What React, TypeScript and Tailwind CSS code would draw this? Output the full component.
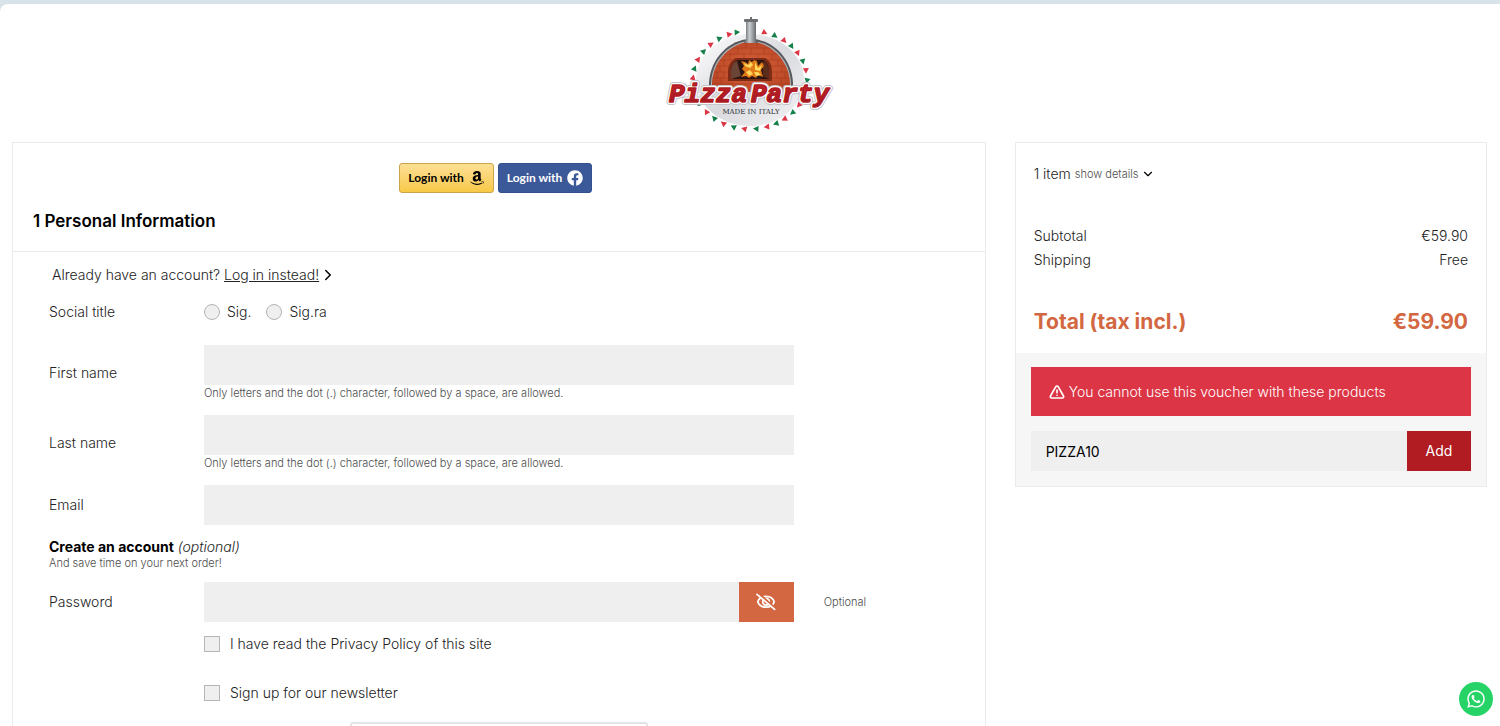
import { useState } from 'react';
import type { ReactNode } from 'react';
import { FaAmazon, FaFacebook, FaWhatsapp } from 'react-icons/fa';
import { ChevronDown, ChevronRight, TriangleAlert } from 'lucide-react';

const NAME_HINT = 'Only letters and the dot (.) character, followed by a space, are allowed.';

// little flags around the badge, angles in degrees (0 = right, clockwise)
const FLAGS = [
  -75, -64, -53, -43, -33, -22, -11, 1, 31, 42, 53, 63, 73, 84, 96, 107, 118, 129, 140, 152, 183, 194, 205, 216, 227,
  238, 249, 257,
];

function Logo() {
  return (
    <svg viewBox="0 0 180 130" className="h-[130px] w-[180px]" role="img" aria-label="Pizza Party">
      <defs>
        <linearGradient id="disc" x1="0" y1="0" x2="1" y2="1">
          <stop offset="0" stopColor="#ffffff" />
          <stop offset="0.5" stopColor="#d9dade" />
          <stop offset="1" stopColor="#f4f4f6" />
        </linearGradient>
        <linearGradient id="pipe" x1="0" x2="1">
          <stop offset="0" stopColor="#55585b" />
          <stop offset="0.4" stopColor="#c9cdd0" />
          <stop offset="1" stopColor="#4a4c4f" />
        </linearGradient>
        <radialGradient id="brick" cx="0.5" cy="0.5" r="0.6">
          <stop offset="0" stopColor="#d8623a" />
          <stop offset="1" stopColor="#b84424" />
        </radialGradient>
        <linearGradient id="title" x1="0" y1="0" x2="0" y2="1">
          <stop offset="0" stopColor="#d0242c" />
          <stop offset="1" stopColor="#8f141b" />
        </linearGradient>
        <clipPath id="dome">
          <path d="M52 82 V73 C53 50 72 32 91 32 C110 32 129 50 130 73 V82 Z" />
        </clipPath>
      </defs>
      <ellipse cx="90" cy="70" rx="54" ry="46" fill="url(#disc)" />
      {FLAGS.map((deg, i) => {
        const a = (deg * Math.PI) / 180;
        return (
          <path
            key={deg}
            d="M-2.5 -3 L3 0 L-2.5 3 Z"
            fill={i % 2 ? '#16804b' : '#dc3545'}
            transform={`translate(${90 + 57 * Math.cos(a)} ${70 + 49 * Math.sin(a)}) rotate(${deg + 100})`}
          />
        );
      })}
      <path d="M49 82 V73 C50 48 70 29 91 29 C112 29 132 48 133 73 V82 Z" fill="#56585c" />
      <path d="M51 82 V73 C52 49 71 31 91 31 C111 31 130 49 131 73 V82 Z" fill="#aeb2b6" />
      <path d="M52 82 V73 C53 50 72 32 91 32 C110 32 129 50 130 73 V82 Z" fill="url(#brick)" />
      <g clipPath="url(#dome)" stroke="#9c3a1d" strokeWidth="0.5" fill="none">
        <path d="M50 38H132M50 44H132M50 50H132M50 56H132M50 62H132M50 68H132M50 74H132" />
        <path d="M86 32v6M97 32v6M78 38v6M91 38v6M104 38v6M70 44v6M84 44v6M98 44v6M112 44v6M64 50v6M118 50v6M60 56v6M122 56v6M57 62v6M64 62v6M117 62v6M125 62v6M61 68v6M121 68v6M70 74v6M84 74v6M98 74v6M112 74v6" />
      </g>
      <path d="M68 71 V62 C68 54 72 50 76 48 H105 C109 50 112 54 112 62 V71 Z" fill="#7d2c17" />
      <path d="M71 69 V62 C71 55 75 51 78 50 H103 C107 52 109 56 109 62 V69 Z" fill="#2d1510" />
      <path d="M71 69 V62 C71 56 74 52 77 51 L81 66 Z" fill="#6a4436" />
      <path d="M109 69 V62 C109 56 106 52 103 51 L103 66 Z" fill="#5c2c1b" />
      <path
        d="M81 67 L85 62 L82 59 L84 56 L81 51 L85 52 L88 54 L89 50 L92 52 L94 50 L97 51 L98 56 L102 52 L104 56 L101 60 L103 67 L98 65 L96 68 L92 66 L89 68 L86 66 Z"
        fill="#e07a17"
      />
      <path
        d="M84 53 L88 55 L91 52 L93 55 L90 58 L85 56 Z M95 52 L98 58 L102 55 L100 61 L95 60 Z M86 62 L90 60 L93 64 L89 66 Z M94 62 L98 62 L101 65 L96 66 Z"
        fill="#ffd75a"
      />
      <path d="M86 11 H96 V29 L98 33 H84 L86 29 Z" fill="url(#pipe)" />
      <rect x="84" y="9" width="14" height="3" rx="1" fill="#6c7073" />
      <rect x="90" y="7" width="2" height="2" fill="#6c7073" />
      <g
        fontSize="26"
        strokeLinejoin="round"
        className="font-['Liberation_Mono',monospace] font-bold italic"
      >
        <g stroke="#c4c4ca" strokeWidth="6" fill="none" aria-hidden="true">
          <text x="9" y="92">Pizza</text>
          <text x="91" y="92">Party</text>
        </g>
        <g stroke="#ffffff" strokeWidth="4" fill="none" aria-hidden="true">
          <text x="9" y="92">Pizza</text>
          <text x="91" y="92">Party</text>
        </g>
        <g stroke="#b01c24" strokeWidth="1.5" fill="url(#title)">
          <text x="9" y="92">Pizza</text>
          <text x="91" y="92">Party</text>
        </g>
      </g>
      <text x="91" y="104" textAnchor="middle" fontSize="7" fill="#2f2f33" className="font-['DejaVu_Serif',serif]">
        MADE IN ITALY
      </text>
    </svg>
  );
}

function EyeSlash() {
  return (
    <svg viewBox="0 0 20 20" className="size-5" fill="none" stroke="currentColor" strokeWidth="1.8" aria-hidden="true">
      <path d="M1.8 9.8 C4 2.6 16 2.6 18.2 9.8 C16 17 4 17 1.8 9.8 Z" />
      <circle cx="10" cy="9.8" r="3.3" />
      <path d="M2.6 1.2 L19 16" stroke="#d36741" strokeWidth="2" />
      <path d="M1 2.4 L18.6 17.4" strokeLinecap="round" />
    </svg>
  );
}

type FormRowProps = {
  id: string;
  label: string;
  hint?: string;
  comment?: string;
  children: ReactNode;
};

function FormRow({ id, label, hint, comment, children }: FormRowProps) {
  return (
    <div className="mb-3.5 flex items-center">
      <label htmlFor={id} className="w-1/6 px-[15px]">
        {label}
      </label>
      <div className="w-2/3 px-[15px]">
        {children}
        {hint && <span className="block text-[11px] leading-4 text-[#4d4d4d]">{hint}</span>}
      </div>
      {comment && <span className="w-1/6 px-[15px] text-[11px] leading-4 text-[#4d4d4d]">{comment}</span>}
    </div>
  );
}

const inputClass = 'block h-10 w-full bg-[#efefef] px-[15px] text-black outline-none';

function PersonalInformation() {
  const [showPassword, setShowPassword] = useState(false);

  return (
    <section className="col-span-2 border border-[#ebebeb]">
      <div className="flex justify-center gap-1 pt-5 pr-1.5 font-['Lato',sans-serif]">
        <button
          type="button"
          className="flex h-[30px] items-center gap-[5px] rounded-[3px] border border-[#c9a44a] bg-linear-to-b from-[#fee094] to-[#f8c845] px-2 text-xs font-bold text-black"
        >
          Login with
          <FaAmazon className="size-4" />
        </button>
        <button
          type="button"
          className="flex h-[30px] items-center gap-[5px] rounded-[3px] border border-[#33508f] bg-[#3b5998] px-2 text-xs font-bold text-white"
        >
          Login with
          <FaFacebook className="size-4" />
        </button>
      </div>
      <h1 className="border-b border-[#ebebeb] px-5 pt-3.5 pb-4 text-[17px] leading-7 font-semibold text-black">
        1 Personal Information
      </h1>

      <form className="px-[21px] pt-[11px]" onSubmit={(e) => e.preventDefault()}>
        <p className="flex items-center px-[18px]">
          Already have an account?&nbsp;
          <a href="#login" className="underline">
            Log in instead!
          </a>
          <ChevronRight className="size-[18px] text-black" />
        </p>

        <fieldset className="mt-[13px] mb-[21px] flex items-center" aria-label="Social title">
          <span className="w-1/6 px-[15px]">Social title</span>
          <div className="flex w-2/3 gap-[15px] px-[15px]">
            {['Sig.', 'Sig.ra'].map((title) => (
              <label key={title} className="flex items-center gap-[7px]">
                <input
                  type="radio"
                  name="social-title"
                  className="size-4 appearance-none rounded-full border border-[#b5b5b5] bg-[#efefef] checked:bg-[#d36741]"
                />
                {title}
              </label>
            ))}
          </div>
        </fieldset>

        <FormRow id="firstname" label="First name" hint={NAME_HINT}>
          <input id="firstname" type="text" className={inputClass} />
        </FormRow>
        <FormRow id="lastname" label="Last name" hint={NAME_HINT}>
          <input id="lastname" type="text" className={inputClass} />
        </FormRow>
        <FormRow id="email" label="Email">
          <input id="email" type="email" className={inputClass} />
        </FormRow>

        <p className="mb-[11px] px-[15px] leading-4">
          <span className="font-bold text-black">Create an account</span> <i>(optional)</i>
          <span className="block text-[11px] leading-4 text-[#4d4d4d]">And save time on your next order!</span>
        </p>

        <FormRow id="password" label="Password" comment="Optional">
          <div className="flex">
            <input id="password" type={showPassword ? 'text' : 'password'} className={inputClass} />
            <button
              type="button"
              aria-label="Show password"
              onClick={() => setShowPassword(!showPassword)}
              className="flex h-10 w-[55px] shrink-0 items-center justify-center bg-[#d36741] text-white"
            >
              <EyeSlash />
            </button>
          </div>
        </FormRow>

        <div className="ml-[16.6667%] flex flex-col gap-[33px] px-[15px] leading-4">
          {['I have read the Privacy Policy of this site', 'Sign up for our newsletter'].map((text) => (
            <label key={text} className="flex items-center gap-2.5">
              <input
                type="checkbox"
                className="size-4 appearance-none border border-[#b5b5b5] bg-[#efefef] checked:bg-[#d36741]"
              />
              {text}
            </label>
          ))}
        </div>

        <button
          type="submit"
          aria-label="Continue"
          className="mx-auto mt-[21px] block h-12 w-[298px] rounded-[3px] border-2 border-[#e4e4e4] bg-white"
        />
      </form>
    </section>
  );
}

function CartSummary() {
  const [code, setCode] = useState('PIZZA10');

  return (
    <aside className="border border-[#ebebeb]">
      <div className="px-[18px] pt-[19px] pb-[15px]">
        <p className="flex items-center gap-1">
          1 item
          <a href="#details" className="flex items-center gap-0.5 text-[11px] text-[#4d4d4d]">
            show details
            <ChevronDown className="size-3.5 text-black" />
          </a>
        </p>
        <dl className="mt-[38px]">
          <div className="flex justify-between">
            <dt>Subtotal</dt>
            <dd>€59.90</dd>
          </div>
          <div className="flex justify-between">
            <dt>Shipping</dt>
            <dd>Free</dd>
          </div>
          <div className="mt-[34px] flex justify-between text-[21px] leading-8 font-bold text-[#d36741]">
            <dt>Total (tax incl.)</dt>
            <dd>€59.90</dd>
          </div>
        </dl>
      </div>
      <div className="bg-[#f6f6f6] px-[15px] pt-3.5 pb-[15px]">
        <div role="alert" className="flex h-[49px] items-center gap-1 bg-[#dc3545] px-[18px] text-white">
          <TriangleAlert className="size-4" strokeWidth={2.5} />
          You cannot use this voucher with these products
        </div>
        <form className="mt-[15px] flex" onSubmit={(e) => e.preventDefault()}>
          <input
            type="text"
            aria-label="Promo code"
            value={code}
            onChange={(e) => setCode(e.target.value)}
            className={`${inputClass} font-normal`}
          />
          <button type="submit" className="h-10 w-16 shrink-0 bg-[#b01c22] font-normal text-white">
            Add
          </button>
        </form>
      </div>
    </aside>
  );
}

export default function App() {
  return (
    <div className="h-screen overflow-hidden bg-[#d8e2e9] pt-1 font-['Inter',sans-serif] text-sm leading-6 font-light text-[#232323]">
      <div className="min-h-full rounded-tl-lg bg-white">
        <header className="flex justify-center pt-1.5">
          <a href="#home">
            <Logo />
          </a>
        </header>
        <main className="grid grid-cols-3 items-start gap-[29px] pt-0.5 pr-[13px] pl-3">
          <PersonalInformation />
          <CartSummary />
        </main>
      </div>
      <a
        href="#whatsapp"
        aria-label="WhatsApp"
        className="fixed right-[7px] bottom-2.5 flex size-[34px] items-center justify-center rounded-full bg-[#25d366] text-white"
      >
        <FaWhatsapp className="size-5" />
      </a>
    </div>
  );
}
